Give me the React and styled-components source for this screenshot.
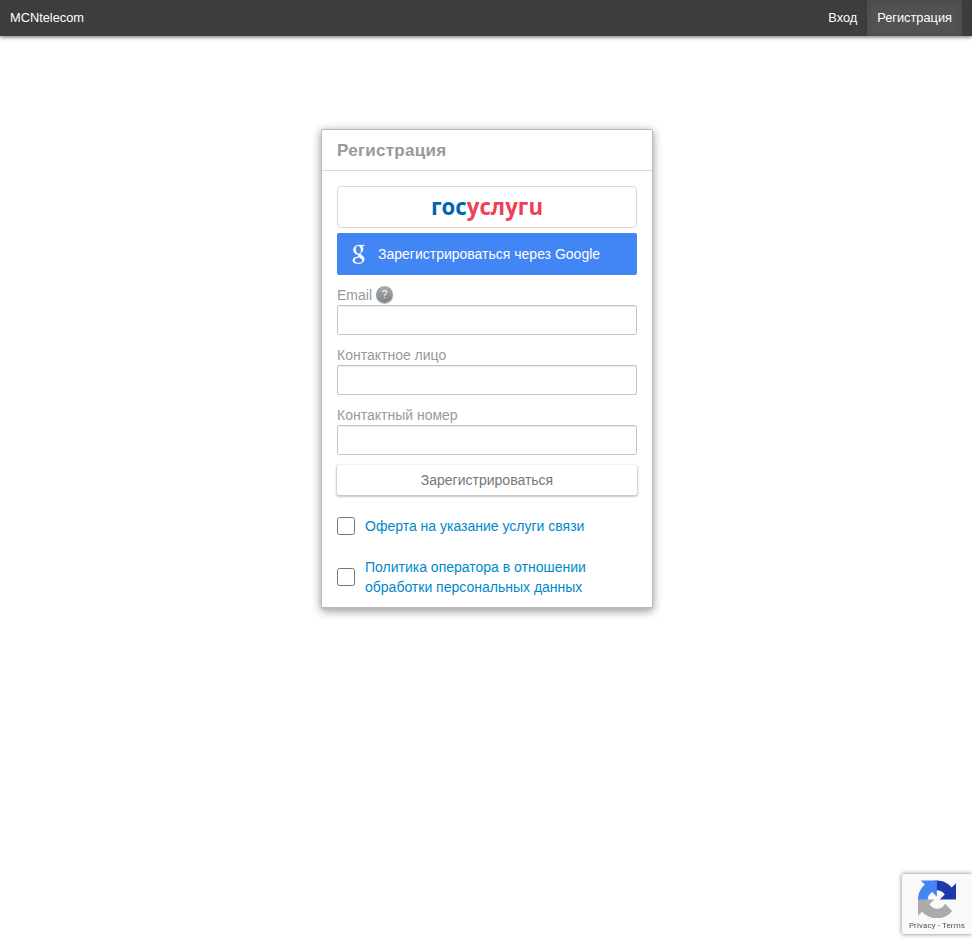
import React from "react";
import styled, { createGlobalStyle } from "styled-components";

const GlobalStyle = createGlobalStyle`
  *, *::before, *::after { box-sizing: border-box; }
  body {
    margin: 0;
    background: #fff;
    color: #333;
    font: 14px/20px "Liberation Sans", Arial, sans-serif;
  }
`;

const Page = styled.div`
  height: 948px;
  overflow: hidden;
`;

const NavBar = styled.nav`
  display: flex;
  height: 36px;
  padding: 0 10px;
  background: #3d3d3d;
  box-shadow: 0 1px 4px rgba(0, 0, 0, 0.6);
  font-size: 12.8px;
`;

const Brand = styled.a`
  margin-right: auto;
  line-height: 36px;
  color: #fff;
`;

const NavItem = styled.a`
  padding: 0 10px;
  line-height: 36px;
  color: #fff;
  background: ${(p) => (p.$active ? "#535353" : "transparent")};
  box-shadow: ${(p) => (p.$active ? "inset 0 3px 8px rgba(0, 0, 0, 0.125)" : "none")};
`;

const Card = styled.main`
  width: 332px;
  margin: 93px 0 0 321px;
  background: #fff;
  border: 1px solid #bbb;
  border-bottom-width: 2px;
  border-radius: 2px;
  box-shadow: 0 2px 10px rgba(0, 0, 0, 0.43);
`;

const CardTitle = styled.h1`
  height: 41px;
  margin: 0;
  padding: 0 15px;
  border-bottom: 1px solid #d9d9d9;
  font-size: 17px;
  letter-spacing: 0.28px;
  line-height: 41px;
  color: #999;
`;

const Form = styled.form`
  display: flex;
  flex-direction: column;
  padding: 15px 15px 10px;
`;

const GosButton = styled.button`
  display: flex;
  align-items: center;
  justify-content: center;
  height: 42px;
  padding: 0;
  background: #fff;
  border: 1px solid #d9d9d9;
  border-radius: 4px;
`;

const GosLogo = styled.svg`
  display: block;
  width: 112px;
  height: 30px;
  overflow: visible;
  font: 700 22.5px "Open Sans", "Noto Sans", sans-serif;
`;

const GoogleButton = styled.button`
  display: flex;
  align-items: center;
  height: 42px;
  margin: 5px 0 10px;
  padding: 0 0 0 15px;
  border: 0;
  border-radius: 2px;
  background: #4285f4;
  color: #fff;
  font: inherit;
`;

const GoogleMark = styled.svg`
  width: 14px;
  height: 20px;
  margin-right: 12px;
`;

const Field = styled.label`
  display: flex;
  flex-direction: column;
  margin-bottom: 10px;
  color: #999;
`;

const FieldName = styled.span`
  display: flex;
  align-items: center;
  gap: 4px;
  height: 20px;
`;

const HelpIcon = styled.span`
  width: 17px;
  height: 17px;
  margin-top: -2px;
  border-radius: 50%;
  background: linear-gradient(#a9adb0, #7d8285);
  box-shadow: 0 1px 1px rgba(0, 0, 0, 0.3);
  color: #fff;
  font-size: 10px;
  line-height: 17px;
  text-align: center;
`;

const Input = styled.input`
  height: 30px;
  padding: 4px 6px;
  border: 1px solid #c4c4c4;
  border-radius: 2px;
  background: #fff;
  box-shadow: inset 0 1px 1px rgba(0, 0, 0, 0.075);
  outline: none;
  font: inherit;
`;

const SubmitButton = styled.button`
  height: 30px;
  padding: 0;
  border: 0;
  border-radius: 2px;
  background: #fff;
  box-shadow: 0 1px 2px 1px rgba(0, 0, 0, 0.22);
  color: #777;
  font: inherit;
`;

const Consent = styled.label`
  display: flex;
  align-items: center;
  margin-top: 21px;
`;

const Checkbox = styled.input`
  flex: none;
  width: 18px;
  height: 18px;
  margin: 0 10px 0 0;
`;

const ConsentLink = styled.a`
  color: #0088cc;
`;

const Captcha = styled.aside`
  position: fixed;
  top: 874px;
  right: 0;
  display: flex;
  flex-direction: column;
  align-items: center;
  width: 70px;
  height: 60px;
  padding-top: 6px;
  border-radius: 2px 0 0 2px;
  background: #f9f9f9;
  box-shadow: 0 0 5px gray;
`;

const CaptchaTerms = styled.div`
  margin-top: 3px;
  color: #555;
  font: 8px/10px Roboto, sans-serif;
  letter-spacing: 0.12px;
  white-space: nowrap;
`;

const fields = [
  { name: "Email", help: true },
  { name: "Контактное лицо" },
  { name: "Контактный номер" },
];

export default function App() {
  return (
    <Page>
      <GlobalStyle />
      <NavBar>
        <Brand>MCNtelecom</Brand>
        <NavItem>Вход</NavItem>
        <NavItem $active>Регистрация</NavItem>
      </NavBar>
      <Card>
        <CardTitle>Регистрация</CardTitle>
        <Form>
          <GosButton type="button" aria-label="госуслуги">
            <GosLogo viewBox="0 0 112 30">
              <text x="0" y="22.5" textLength="112" lengthAdjust="spacingAndGlyphs">
                <tspan fill="#0065b1">гос</tspan>
                <tspan fill="#ee3f58">услугu</tspan>
              </text>
            </GosLogo>
          </GosButton>
          <GoogleButton type="button">
            <GoogleMark viewBox="0 0 14 20">
              <path
                fill="#fff"
                stroke="#fff"
                strokeWidth="0.3"
                fillRule="evenodd"
                d="M12.800 1H7C3.600 1 1.400 3.300 1.400 6c0 2.700 2 4.600 4.900 4.600-.6 1-.4 1.600.2 2.200C3 12.900.7 14.200.7 16.400c0 2 2 3.300 5.300 3.300 4 0 6.300-2 6.300-4.500 0-2-1-3-2.800-4.300-1.200-.8-1.300-1.500-.3-2.300C10.500 7.600 11.100 6.600 11.100 5.100c0-1.400-.5-2.500-1.400-3.200h1.900zM6.300 1.800C8 1.800 9 4.300 9 6.500c0 2.200-.8 3.300-2.300 3.300-1.800 0-3-2.200-3-4.500 0-2.200.9-3.500 2.600-3.500zM7.400 13.500c1.800 1.200 2.900 1.900 2.900 3.200 0 1.300-1.100 2.200-3.600 2.200s-4.100-1.100-4.100-2.700c0-1.700 1.600-2.700 4.800-2.700z"
              />
            </GoogleMark>
            Зарегистрироваться через Google
          </GoogleButton>
          {fields.map((field) => (
            <Field key={field.name}>
              <FieldName>
                {field.name}
                {field.help && <HelpIcon>?</HelpIcon>}
              </FieldName>
              <Input type="text" />
            </Field>
          ))}
          <SubmitButton type="button">Зарегистрироваться</SubmitButton>
          <Consent>
            <Checkbox type="checkbox" />
            <ConsentLink>Оферта на указание услуги связи</ConsentLink>
          </Consent>
          <Consent>
            <Checkbox type="checkbox" />
            <ConsentLink>Политика оператора в отношении обработки персональных данных</ConsentLink>
          </Consent>
        </Form>
      </Card>
      <Captcha>
        <svg width="38" height="38" viewBox="0 -0.8 64 64">
          <path fill="#1c3aa9" d="M64 31.955l-.033-1.37V4.687l-7.16 7.16C50.948 4.674 42.033.093 32.05.093c-10.4 0-19.622 4.96-25.458 12.64l11.736 11.86a15.55 15.55 0 0 1 4.754-5.334c2.05-1.6 4.952-2.906 8.968-2.906.485 0 .86.057 1.135.163 4.976.393 9.288 3.14 11.828 7.124l-8.307 8.307L64 31.953" />
          <path fill="#4285f4" d="M31.862.094l-1.37.033H4.594l7.16 7.16C4.58 13.147 0 22.06 0 32.046c0 10.4 4.96 19.622 12.64 25.458L24.5 45.768a15.55 15.55 0 0 1-5.334-4.754c-1.6-2.05-2.906-4.952-2.906-8.968 0-.485.057-.86.163-1.135.393-4.976 3.14-9.288 7.124-11.828l8.307 8.307L31.86.095" />
          <path fill="#ababab" d="M.001 32.045l.033 1.37v25.898l7.16-7.16c5.86 7.173 14.774 11.754 24.76 11.754 10.4 0 19.622-4.96 25.458-12.64l-11.736-11.86a15.55 15.55 0 0 1-4.754 5.334c-2.05 1.6-4.952 2.906-8.968 2.906-.485 0-.86-.057-1.135-.163-4.976-.393-9.288-3.14-11.828-7.124l8.307-8.307c-10.522.04-22.4.066-27.295-.005" />
        </svg>
        <CaptchaTerms>Privacy - Terms</CaptchaTerms>
      </Captcha>
    </Page>
  );
}
